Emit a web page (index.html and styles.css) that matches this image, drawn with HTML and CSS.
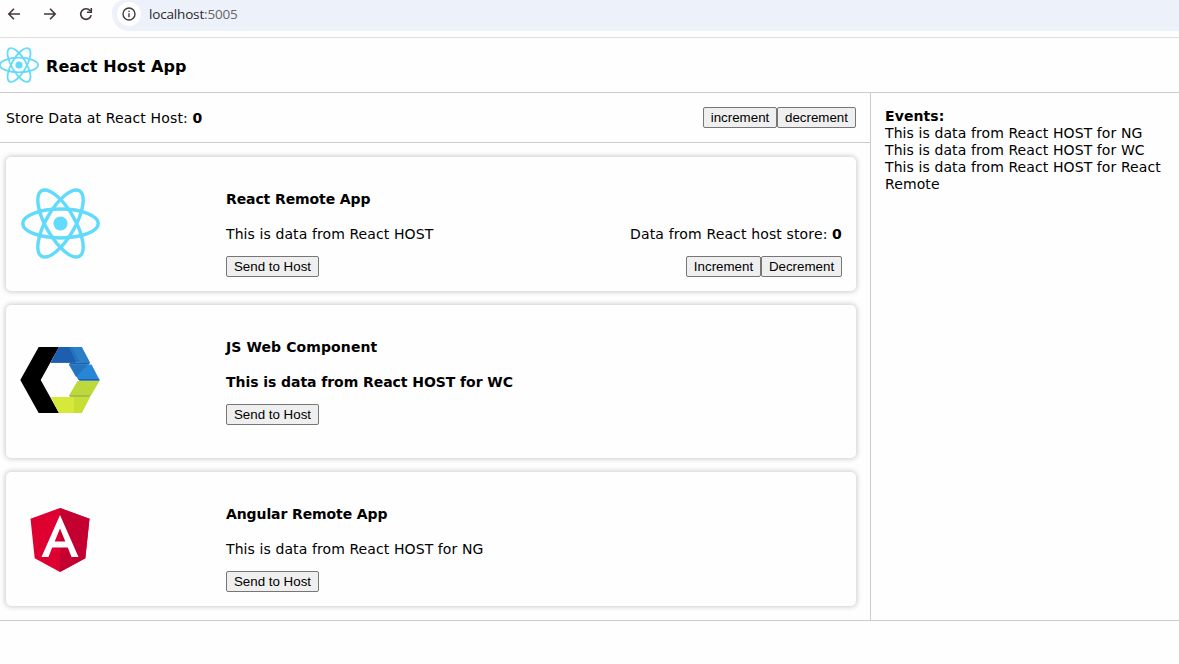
FILE: index.html
```html
<!DOCTYPE html>
<html lang="en">
<head>
<meta charset="utf-8">
<title>React Host App</title>
<link rel="stylesheet" href="styles.css">
</head>
<body>
<svg class="defs" width="0" height="0">
  <symbol id="react" viewBox="-11.5 -10.232 23 20.463">
    <circle r="2.05" fill="#61dafb"/>
    <g fill="none" stroke="#61dafb"><ellipse rx="11" ry="4.2"/><ellipse rx="11" ry="4.2" transform="rotate(60)"/><ellipse rx="11" ry="4.2" transform="rotate(120)"/></g>
  </symbol>
</svg>
<div class="toolbar">
  <svg class="nav" viewBox="0 0 112 37" fill="none" stroke="#43383b" stroke-width="1.6">
    <path d="M20 14H9M14 8.8L8.8 14L14 19.2"/>
    <path d="M44 14h11M50 8.8L55.2 14L50 19.2"/>
    <path d="M90.2 10.8A5.3 5.3 0 1 0 91.2 15.2M91.3 8V12.3H87"/>
  </svg>
  <div class="address">
    <span class="info"><svg width="14" height="14" viewBox="0 0 14 14" fill="none" stroke="#43383b" stroke-width="1.4"><circle cx="7" cy="7" r="6"/><path d="M7 6.2V10.3M7 3.7V5.1"/></svg></span>
    <span class="url">localhost<span class="port">:5005</span></span>
  </div>
</div>
<header class="header">
  <svg class="logo"><use href="#react"/></svg>
  <h1 class="title">React Host App</h1>
</header>
<main class="main">
  <div class="content">
    <div class="store">
      <span class="wide">Store Data at React Host: <b>0</b></span>
      <span class="buttons"><button class="w74">increment</button><button class="w79">decrement</button></span>
    </div>
    <div class="cards">
      <section class="card">
        <div class="pic"><svg class="atom" width="79" height="71"><use href="#react"/></svg></div>
        <div class="info-col">
          <h2>React Remote App</h2>
          <p>This is data from React HOST</p>
          <button class="w93">Send to Host</button>
        </div>
        <div class="side">
          <p class="wide">Data from React host store: <b>0</b></p>
          <span class="buttons"><button class="w75">Increment</button><button class="w81">Decrement</button></span>
        </div>
      </section>
      <section class="card tall">
        <div class="pic"><svg class="hexagon" width="80" height="66" viewBox="0 0 80 66">
          <path d="M18.7 0H39L20.7 33L39 66H18.7L.3 33Z"/>
          <path d="M39 0H61.7L70 15.7H30.7Z" fill="#2473bd"/>
          <path d="M39 0H49L56 15.7H30.7Z" fill="#1d5eaf"/>
          <path d="M52 0H61.7L70 15.7H60Z" fill="#2b7fc7"/>
          <path d="M49 17.5H71.5L79.6 33H58.5Z" fill="#2787d6"/>
          <path d="M49 17.5H68L56 30Z" fill="#2475bd"/>
          <path d="M50 15.7H70L69 17.5H49ZM58.5 32H79.2L79.6 33.8H59.5Z" fill="#1761b2"/>
          <path d="M57.5 34H79.5L71 48.5H49Z" fill="#bdd83a"/>
          <path d="M30.7 50H70L61.7 66H39Z" fill="#d6e83a"/>
          <path d="M54 50H70L61.7 66H54Z" fill="#c8de35"/>
          <path d="M49 48H71L69.5 50H50Z" fill="#a3bf53"/>
        </svg></div>
        <div class="info-col">
          <h2 class="spaced">JS Web Component</h2>
          <p class="bold">This is data from React HOST for WC</p>
          <button class="w93">Send to Host</button>
        </div>
      </section>
      <section class="card">
        <div class="pic"><svg class="angular" width="60" height="64" viewBox="0 0 60 64">
          <path d="M30 0L59.5 10.7L55.3 50.3L30 64L4.7 50.3L.5 10.7Z" fill="#dd0031"/>
          <path d="M30 0L59.5 10.7L55.3 50.3L30 64Z" fill="#c3002f"/>
          <path fill-rule="evenodd" d="M30 7L48.5 49H41.5L37.8 39.5H22.2L18.5 49H11.5ZM30 20.5L24.7 33.5H35.3Z" fill="#fff"/>
        </svg></div>
        <div class="info-col">
          <h2>Angular Remote App</h2>
          <p>This is data from React HOST for NG</p>
          <button class="w93">Send to Host</button>
        </div>
      </section>
    </div>
  </div>
  <aside class="events">
    <b>Events:</b>
    <div>This is data from React HOST for NG</div>
    <div>This is data from React HOST for WC</div>
    <div>This is data from React HOST for React Remote</div>
  </aside>
</main>
</body>
</html>
```
FILE: styles.css
```css
* { box-sizing: border-box; }
body { margin: 0; background: #fefefe; color: #000; font: 14px/17px Verdana, "DejaVu Sans", sans-serif; letter-spacing: 0.095px; }
h1, h2, p { margin: 0; }
svg { display: block; flex: none; }
.defs { position: absolute; }
.toolbar { display: flex; height: 38px; border-bottom: 1px solid #dedede; }
.nav { width: 112px; height: 37px; }
.address { display: flex; flex: 1; height: 31px; padding-left: 5px; align-items: flex-start; background: #ecf1fa; border-bottom-left-radius: 17px 17px; border-top-left-radius: 12px; }
.info { display: flex; width: 24px; height: 24px; margin-top: 2px; align-items: center; justify-content: center; border-radius: 50%; background: #fff; }
.url { margin: 5px 0 0 8px; font: 13.5px/18px "Open Sans", sans-serif; letter-spacing: -0.17px; color: #2b282c; white-space: nowrap; }
.port { color: #666; }
.header { display: flex; height: 55px; align-items: center; border-bottom: 1px solid #ccc; }
.logo { width: 40px; height: 36px; margin-left: -1px; }
.title { margin: 3px 0 0 7px; font-size: 16px; line-height: 20px; letter-spacing: 0.1px; }
.main { display: flex; height: 528px; border-bottom: 1px solid #ccc; }
.content { width: 871px; border-right: 1px solid #ccc; }
.store { display: flex; height: 50px; padding: 0 14px 0 6px; align-items: center; justify-content: space-between; border-bottom: 1px solid #ccc; }
.store .wide { padding-top: 2px; }
.wide { letter-spacing: 0.14px; }
.buttons { display: flex; }
button { display: block; height: 21px; padding: 0; font: 13.333px/15px "Liberation Sans", Arial, sans-serif; letter-spacing: 0; color: #000; background: #efefef; border: 1px solid #767676; border-radius: 2px; white-space: nowrap; }
.w74 { width: 74px; }
.w75 { width: 75px; }
.w79 { width: 79px; }
.w81 { width: 81px; }
.w93 { width: 93px; }
.cards { display: flex; flex-direction: column; gap: 14px; padding: 14px 14px 0 6px; }
.card { display: flex; height: 134px; padding: 0 14px; border-radius: 5px; background: #fefefe; box-shadow: 0 0 5px 1px #ccc; }
.tall { height: 153px; }
.pic { display: flex; width: 206px; align-items: center; }
.atom { margin: 0 0 2px 0.5px; }
.hexagon { margin-bottom: 3px; }
.angular { margin: 1px 0 0 10px; }
.info-col { display: flex; flex: 1; flex-direction: column; align-items: flex-start; padding-top: 34px; }
h2 { margin-bottom: 18px; font-size: 14px; line-height: 17px; letter-spacing: -0.1px; }
.spaced { letter-spacing: 0.1px; }
.info-col p { margin-bottom: 13px; }
.bold { font-weight: bold; letter-spacing: -0.06px; }
.side { display: flex; flex-direction: column; align-items: flex-end; gap: 13px; padding-top: 69px; }
.events { flex: 1; padding: 15px 10px 0 14px; }
```
